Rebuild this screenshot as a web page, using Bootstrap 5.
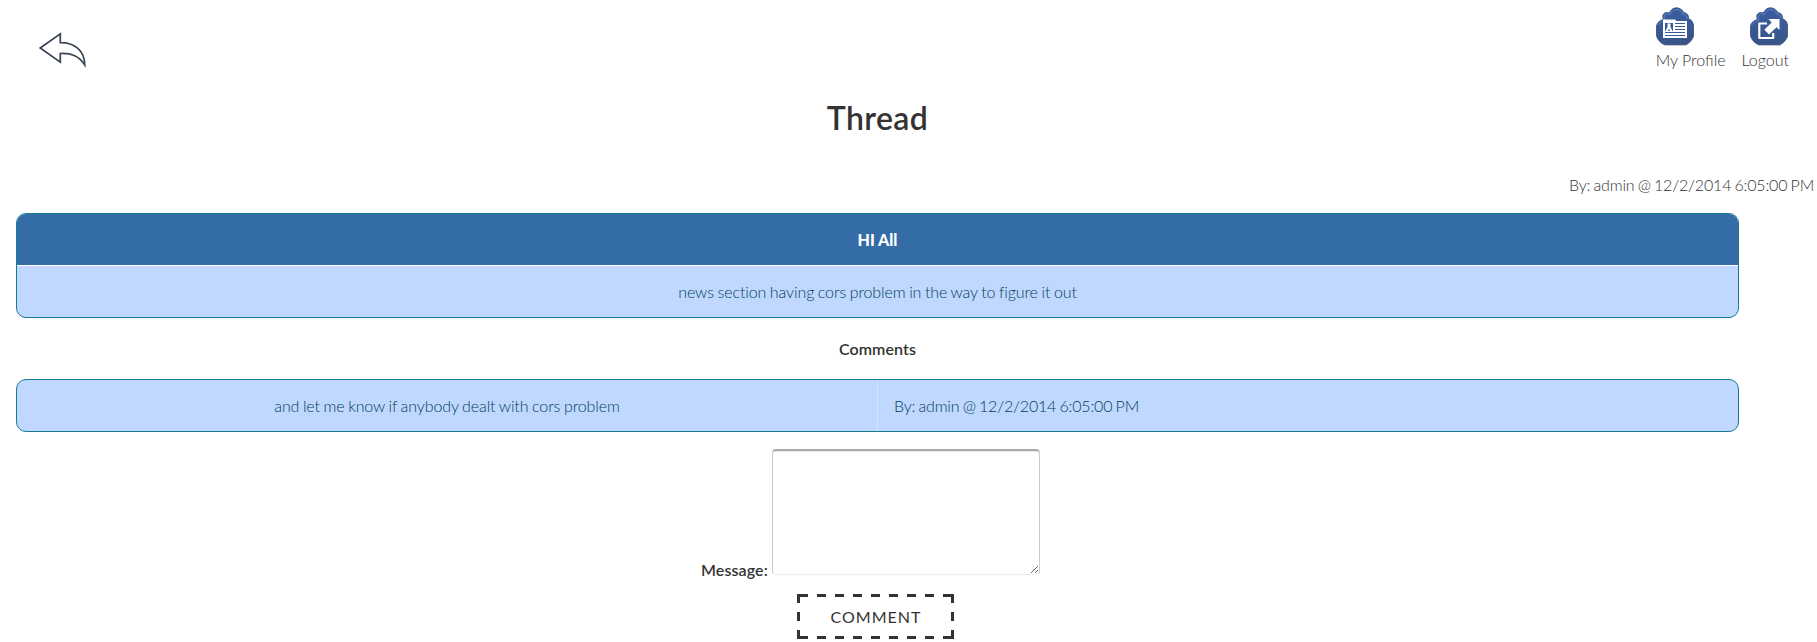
<!DOCTYPE html>
<html lang="en">
<head>
<meta charset="utf-8">
<meta name="viewport" content="width=device-width, initial-scale=1">
<title>Thread</title>
<link href="https://cdn.jsdelivr.net/npm/bootstrap@5.3.0/dist/css/bootstrap.min.css" rel="stylesheet">
<style>
  body { font-family: Lato, "Liberation Sans", sans-serif; font-size: 16px; font-weight: 300; line-height: 24px; color: #333; background: #fff; overflow: hidden; }
  .top-bar { height: 92px; padding-left: 38px; padding-right: 28px; }
  .back-link { margin-top: 31px; line-height: 0; }
  .user-link { color: #333; text-decoration: none; padding-top: 6px; }
  .user-link svg { display: block; margin-bottom: 2px; }
  .user-link.d-flex svg { margin-right: 1px; }
  .main-col { width: 1723px; margin-left: 16px; }
  .page-title { font-size: 32px; font-weight: 600; letter-spacing: .4px; line-height: 52px; height: 79px; }
  .byline { height: 42px; line-height: 28px; padding-right: 3px; }
  .stamp { letter-spacing: -.18px; word-spacing: -.9px; }
  .thread-box { border: 1px solid #147d94; border-radius: 10px; background: #c0d8ff; color: #004156; overflow: hidden; }
  .thread-head { background: #346ca7; color: #fff; font-weight: 900; line-height: 52px; height: 52px; border-bottom: 1px solid #fff; }
  .thread-text { line-height: 51px; }
  .tight { letter-spacing: -.1px; word-spacing: -.65px; }
  .comment-text { width: 861px; border-right: 1px solid #d3e4f7; }
  .comments-title { font-weight: 600; letter-spacing: .1px; line-height: 61px; height: 61px; }
  .message-row { margin-top: 17px; padding-left: 685px; gap: 5px; }
  .message-label { font-weight: 600; letter-spacing: .1px; line-height: 24px; margin-bottom: -7px; width: 66px; white-space: nowrap; }
  .message-input { width: 268px; height: 126px; border: 1px solid #ccc; border-top: 2px solid #aaa; border-bottom-color: #eee; border-radius: 4px; box-shadow: inset 0 1px 1px #e8e8e8; resize: both; }
  .dash-btn { width: 157px; height: 45px; margin: 19px 0 0 781px; padding: 0 0 0 1px; border: 0; border-radius: 0; font-size: 16px; font-weight: 400; letter-spacing: 1px; line-height: 45px; color: #333;
    background:
      repeating-linear-gradient(90deg, #333 0 9px, transparent 9px 18px) 2px 0 / 153px 3px no-repeat,
      repeating-linear-gradient(90deg, #333 0 9px, transparent 9px 18px) 2px 100% / 153px 3px no-repeat,
      repeating-linear-gradient(180deg, #333 0 9px, transparent 9px 18px) 0 0 / 3px 45px no-repeat,
      repeating-linear-gradient(180deg, #333 0 9px, transparent 9px 18px) 100% 0 / 3px 45px no-repeat; }
</style>
</head>
<body>
<svg width="0" height="0" class="position-absolute" aria-hidden="true">
  <defs>
    <linearGradient id="blue" x1="0" y1="0" x2="0" y2="1"><stop offset="0" stop-color="#3b5ea2"/><stop offset="1" stop-color="#385488"/></linearGradient>
    <g id="cloud">
      <path d="M8 38.500H30L35 34L30 39.700H9Z" fill="#000" opacity=".3"/>
      <path d="M7.500 8C9 6.500 11 6.300 13.500 7C15 3 18.500 1.300 22 2C25 2.600 26.800 4.500 27.500 6.500C31 6.800 33 9.500 32.500 12.500C36 14 37.700 17 37.700 21V29.500C37 33 33.500 37 30.500 38.500H8C4.500 37 1 33 .5 29.500V21C.5 17.500 3 14.500 7.500 13.500C6.500 11.500 6.500 9.500 7.500 8Z" fill="url(#blue)" stroke="#2d4880" stroke-width=".8"/>
      <path d="M2 19C3.500 16.500 6 15 9 14.500C7.500 12 7.800 9.500 9.200 8.500C10.700 7.500 12.500 7.600 14.500 8.400C16 4.400 19 2.900 22 3.500C24.500 4 25.800 5.800 26.200 8C29.500 7.800 31.500 10 31 13" fill="none" stroke="#6387c5" stroke-width=".9"/>
    </g>
  </defs>
</svg>

<header class="top-bar d-flex justify-content-between align-items-start">
  <a class="back-link" href="#" aria-label="Back">
    <svg width="50" height="40" viewBox="0 0 50 40" fill="none" stroke="#3b4555" stroke-width="1.700"><path d="M2.200 17L22.300 2.800V11.600C36 11.500 46.500 19 46.800 34C41 25 34 22 22.300 22.500V31.200Z"/></svg>
  </a>
  <nav class="d-flex gap-3">
    <a class="user-link" href="#">
      <svg width="38" height="40" viewBox="0 0 38 40"><use href="#cloud"/>
        <path d="M7 13.500H19L20.500 15H31V32H7Z" fill="#fff"/>
        <path d="M9 17H17V25H9Z" fill="#3a5997"/><path d="M11.500 17.500H14.500V21L16.500 25H14L13 22.500L12 25H9.500L11.500 21Z" fill="#fff"/>
        <path d="M19 17.500H29M19 20.500H29M19 23.500H29M9 26.500H29M9 29.500H29" stroke="#3a5997" stroke-width="1"/>
      </svg>My Profile</a>
    <a class="user-link d-flex flex-column align-items-end" href="#">
      <svg width="38" height="40" viewBox="0 0 38 40"><use href="#cloud"/>
        <path d="M17 17.500H9.300V32H23.200V27" fill="none" stroke="#fff" stroke-width="2.200" stroke-linejoin="round"/>
        <path d="M18.500 13H29.500V24L26.500 21.300L19 28.500L14.300 23.800L21.700 16.500Z" fill="#fff"/>
      </svg>Logout</a>
  </nav>
</header>

<h1 class="page-title main-col text-center mb-0">Thread</h1>
<div class="byline stamp text-end">By: admin @ 12/2/2014 6:05:00 PM</div>

<main class="main-col">
  <section class="thread-box text-center">
    <div class="thread-head">HI All</div>
    <div class="thread-text tight">news section having cors problem in the way to figure it out</div>
  </section>
  <h2 class="comments-title text-center fs-6 mb-0">Comments</h2>
  <section class="thread-box thread-text d-flex">
    <div class="comment-text tight text-center">and let me know if anybody dealt with cors problem</div>
    <div class="stamp ps-3">By: admin @ 12/2/2014 6:05:00 PM</div>
  </section>
  <form>
    <div class="message-row d-flex align-items-end">
      <label class="message-label" for="message">Message:</label>
      <textarea class="message-input" id="message"></textarea>
    </div>
    <button type="button" class="dash-btn btn d-block text-uppercase">Comment</button>
  </form>
</main>
<script src="https://cdn.jsdelivr.net/npm/bootstrap@5.3.0/dist/js/bootstrap.bundle.min.js"></script>
</body>
</html>
